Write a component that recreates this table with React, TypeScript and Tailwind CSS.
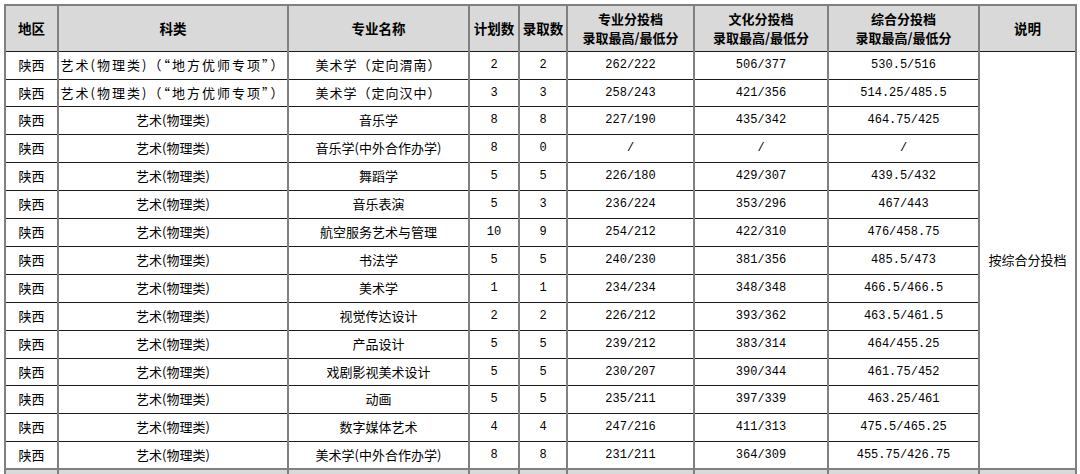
import React from "react";

const rows: string[][] = [
  ["陕西", "艺术(物理类)（“地方优师专项”）", "美术学（定向渭南）", "2", "2", "262/222", "506/377", "530.5/516"],
  ["陕西", "艺术(物理类)（“地方优师专项”）", "美术学（定向汉中）", "3", "3", "258/243", "421/356", "514.25/485.5"],
  ["陕西", "艺术(物理类)", "音乐学", "8", "8", "227/190", "435/342", "464.75/425"],
  ["陕西", "艺术(物理类)", "音乐学(中外合作办学)", "8", "0", "/", "/", "/"],
  ["陕西", "艺术(物理类)", "舞蹈学", "5", "5", "226/180", "429/307", "439.5/432"],
  ["陕西", "艺术(物理类)", "音乐表演", "5", "3", "236/224", "353/296", "467/443"],
  ["陕西", "艺术(物理类)", "航空服务艺术与管理", "10", "9", "254/212", "422/310", "476/458.75"],
  ["陕西", "艺术(物理类)", "书法学", "5", "5", "240/230", "381/356", "485.5/473"],
  ["陕西", "艺术(物理类)", "美术学", "1", "1", "234/234", "348/348", "466.5/466.5"],
  ["陕西", "艺术(物理类)", "视觉传达设计", "2", "2", "226/212", "393/362", "463.5/461.5"],
  ["陕西", "艺术(物理类)", "产品设计", "5", "5", "239/212", "383/314", "464/455.25"],
  ["陕西", "艺术(物理类)", "戏剧影视美术设计", "5", "5", "230/207", "390/344", "461.75/452"],
  ["陕西", "艺术(物理类)", "动画", "5", "5", "235/211", "397/339", "463.25/461"],
  ["陕西", "艺术(物理类)", "数字媒体艺术", "4", "4", "247/216", "411/313", "475.5/465.25"],
  ["陕西", "艺术(物理类)", "美术学(中外合作办学)", "8", "8", "231/211", "364/309", "455.75/426.75"],
];

const heights = [28, 27, 28, 28, 28, 28, 28, 28, 28, 28, 28, 27, 28, 28, 28];

const th =
  "border-x-2 border-t-2 border-b border-x-[#808080] border-t-[#808080] border-b-[#1a1a1a] bg-[#d9d9d9] p-0 text-center align-middle font-bold text-[13.5px] leading-[17px] text-black font-['Noto_Sans_CJK_SC',sans-serif]";
const tdBase =
  "border-x-2 border-y border-x-[#808080] border-y-[#1a1a1a] p-0 text-center align-middle text-black whitespace-nowrap";
const cjk = "font-['Noto_Sans_CJK_SC',sans-serif] text-[13px] leading-[16px]";
const mono = "font-['Liberation_Mono','Noto_Sans_CJK_SC',monospace] text-[12px] leading-[16px]";

function TwoLine({ a }: { a: string }) {
  return (
    <div className="flex flex-col items-center text-[13px]">
      <div className="h-[19px] leading-[19px]">{a}</div>
      <div className="h-[19px] leading-[19px]">录取最高/最低分</div>
    </div>
  );
}

export default function App() {
  return (
    <div className="w-[1080px] h-[474px] overflow-hidden bg-white pt-[4px] pl-[4px]">
      <table className="table-fixed border-collapse w-[1071px]">
        <colgroup>
          <col className="w-[53px]" />
          <col className="w-[230px]" />
          <col className="w-[181px]" />
          <col className="w-[50px]" />
          <col className="w-[48px]" />
          <col className="w-[127px]" />
          <col className="w-[134px]" />
          <col className="w-[151px]" />
          <col className="w-[97px]" />
        </colgroup>
        <thead>
          <tr className="h-[46px]">
            <th className={th}>地区</th>
            <th className={th}>科类</th>
            <th className={th}>专业名称</th>
            <th className={th}>计划数</th>
            <th className={th}>录取数</th>
            <th className={th}>
              <TwoLine a="专业分投档" />
            </th>
            <th className={th}>
              <TwoLine a="文化分投档" />
            </th>
            <th className={th}>
              <TwoLine a="综合分投档" />
            </th>
            <th className={th}>说明</th>
          </tr>
        </thead>
        <tbody>
          {rows.map((r, i) => (
            <tr key={i} style={{ height: heights[i] }}>
              <td className={`${tdBase} ${cjk}`}>{r[0]}</td>
              <td className={`${tdBase} ${cjk} ${i < 2 ? "tracking-[2px]" : ""}`}>{r[1]}</td>
              <td className={`${tdBase} ${cjk} ${i < 2 ? "tracking-[1px]" : ""}`}>{r[2]}</td>
              <td className={`${tdBase} ${mono}`}>{r[3]}</td>
              <td className={`${tdBase} ${mono}`}>{r[4]}</td>
              <td className={`${tdBase} ${mono}`}>{r[5]}</td>
              <td className={`${tdBase} ${mono}`}>{r[6]}</td>
              <td className={`${tdBase} ${mono}`}>{r[7]}</td>
              {i === 0 && (
                <td rowSpan={15} className={`${tdBase} ${cjk}`}>
                  按综合分投档
                </td>
              )}
            </tr>
          ))}
          <tr className="h-[28px]">
            {Array.from({ length: 9 }).map((_, k) => (
              <td
                key={k}
                className="border-x-2 border-t-2 border-x-[#808080] border-t-[#808080] bg-[#d9d9d9] p-0"
              />
            ))}
          </tr>
        </tbody>
      </table>
    </div>
  );
}
